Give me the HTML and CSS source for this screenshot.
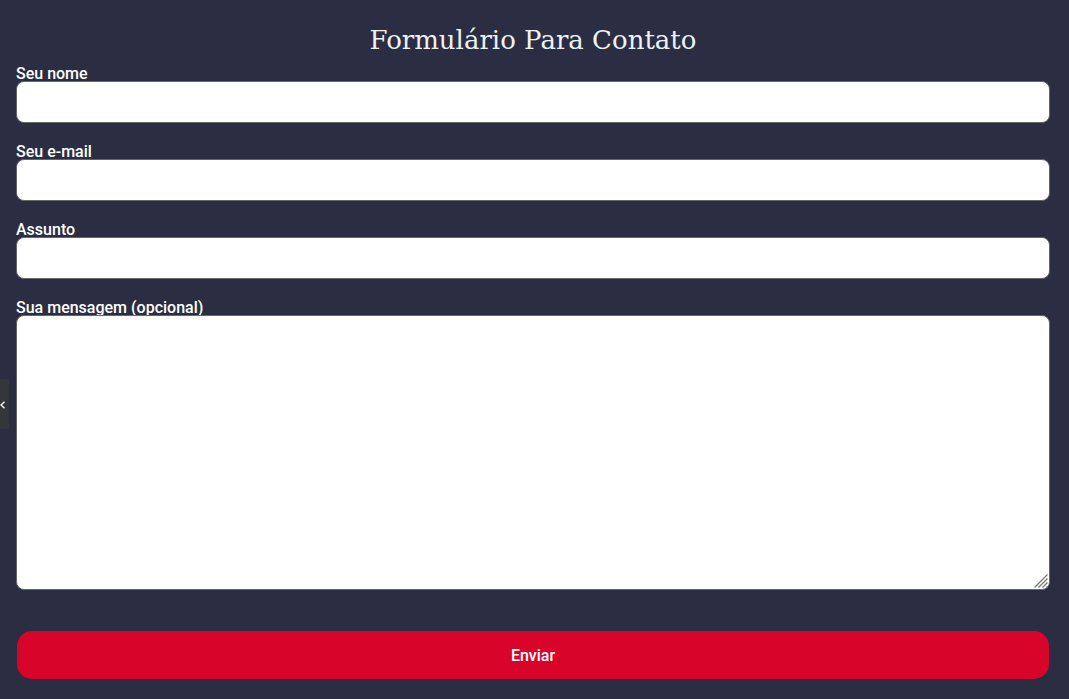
FILE: index.html
```html
<!DOCTYPE html>
<html lang="pt-BR">
<head>
<meta charset="utf-8">
<meta name="viewport" content="width=device-width, initial-scale=1">
<title>Formulário Para Contato</title>
<link rel="stylesheet" href="styles.css">
</head>
<body>
<main class="contact">
  <h1 class="contact-title">Formulário Para Contato</h1>
  <form class="contact-form">
    <div class="field">
      <label class="field-label" for="nome">Seu nome</label>
      <input class="field-control" id="nome" type="text">
    </div>
    <div class="field">
      <label class="field-label" for="email">Seu e-mail</label>
      <input class="field-control" id="email" type="email">
    </div>
    <div class="field">
      <label class="field-label" for="assunto">Assunto</label>
      <input class="field-control" id="assunto" type="text">
    </div>
    <div class="field">
      <label class="field-label" for="mensagem">Sua mensagem (opcional)</label>
      <textarea class="field-control field-message" id="mensagem" rows="10"></textarea>
      <svg class="field-grip" viewBox="0 0 15 15" aria-hidden="true"><path d="M.5 13.5l13-13M4.5 13.5l9-9M8.5 13.5l5-5M12.5 13.5l1-1" fill="none" stroke="#77777c" stroke-width="1.3"/></svg>
    </div>
    <button class="submit" type="submit">Enviar</button>
  </form>
</main>
<button class="side-toggle" type="button" aria-label="Abrir painel">
  <svg class="side-icon" viewBox="0 0 6 8" aria-hidden="true"><path d="M4.5.8 1 4l3.5 3.2" fill="none" stroke="currentColor" stroke-width="1.3"/></svg>
</button>
</body>
</html>
```
FILE: styles.css
```css
* {
  box-sizing: border-box;
}

body {
  margin: 0;
  background: #2b2d42;
  color: #fff;
  font-family: Roboto, "Liberation Sans", sans-serif;
  font-size: 16px;
  line-height: 18px;
}

.contact {
  padding: 24px 19px 20px 16px;
}

.contact-title {
  margin: 0 0 9px;
  color: #edf2f4;
  font-family: "Roboto Slab", "DejaVu Serif", serif;
  font-size: 26px;
  font-weight: 400;
  line-height: 32px;
  text-align: center;
}

.contact-form {
  display: flex;
  flex-direction: column;
  gap: 20px;
}

.field {
  position: relative;
  display: flex;
  flex-direction: column;
}

.field-label {
  height: 16px;
  font-weight: 500;
}

.field-control {
  width: 100%;
  height: 42px;
  padding: 8px 16px;
  border: 1px solid #666;
  border-radius: 8px;
  background: #fff;
  color: #333;
  font: inherit;
}

.field-message {
  height: 275px;
  resize: vertical;
}

.field-message::-webkit-resizer {
  background: transparent;
}

.field-grip {
  position: absolute;
  right: 1px;
  bottom: 1px;
  width: 15px;
  height: 15px;
  pointer-events: none;
}

.submit {
  height: 48px;
  margin: 21px 1px 0;
  padding: 2px 16px 0;
  border: 0;
  border-radius: 15px;
  background: #d90429;
  color: #fff;
  font: inherit;
  font-weight: 500;
}

.side-toggle {
  position: fixed;
  top: 379px;
  left: 0;
  display: flex;
  align-items: center;
  width: 9px;
  height: 50px;
  padding: 2px 0 0;
  border: 0;
  background: #343739;
  color: #fff;
}

.side-icon {
  width: 6px;
  height: 8px;
}
```
